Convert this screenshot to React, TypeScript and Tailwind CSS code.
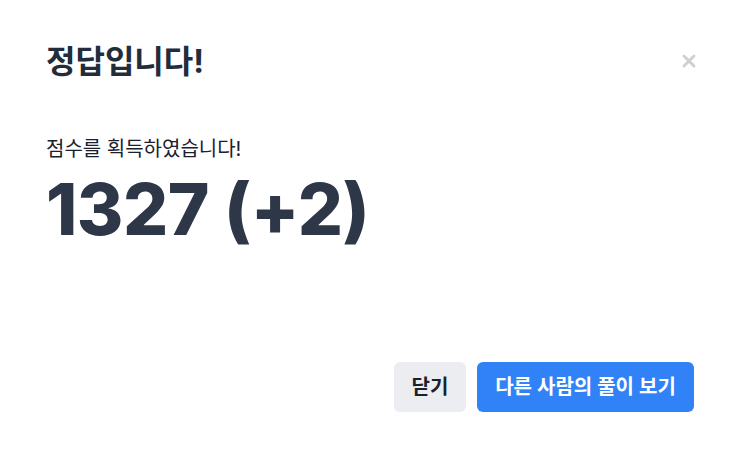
import { X } from "lucide-react";

const font = { fontFamily: '"Inter", "Noto Sans CJK KR", sans-serif' };

export default function App() {
  return (
    <div
      className="w-[750px] h-[459px] bg-white flex flex-col text-[#2D3748]"
      style={font}
    >
      <div className="flex items-start justify-between pl-[46px] pr-[51px] pt-[38px]">
        <h2 className="text-[32px] font-bold leading-[48px] text-[#222D3C]">
          정답입니다!
        </h2>
        <button className="mt-[13px] text-[#D0D0D0]">
          <X size={20} strokeWidth={3.5} />
        </button>
      </div>

      <div className="pl-[46px] pt-[48px] flex-1">
        <p className="text-[20px] leading-[30px] text-[#1A202C]">
          점수를 획득하였습니다!
        </p>
        <p className="mt-[10px] text-[71px] font-extrabold leading-none tracking-[-0.5px]">
          1327 (+2)
        </p>
      </div>

      <div className="flex justify-end gap-[11px] pr-[56px] pb-[47px]">
        <button className="h-[50px] w-[72px] rounded-[6px] bg-[#EBEDF1] text-[20px] font-semibold text-[#1A202C]">
          닫기
        </button>
        <button className="h-[50px] w-[217px] rounded-[6px] bg-[#3182F6] text-[20px] font-semibold text-white">
          다른 사람의 풀이 보기
        </button>
      </div>
    </div>
  );
}
